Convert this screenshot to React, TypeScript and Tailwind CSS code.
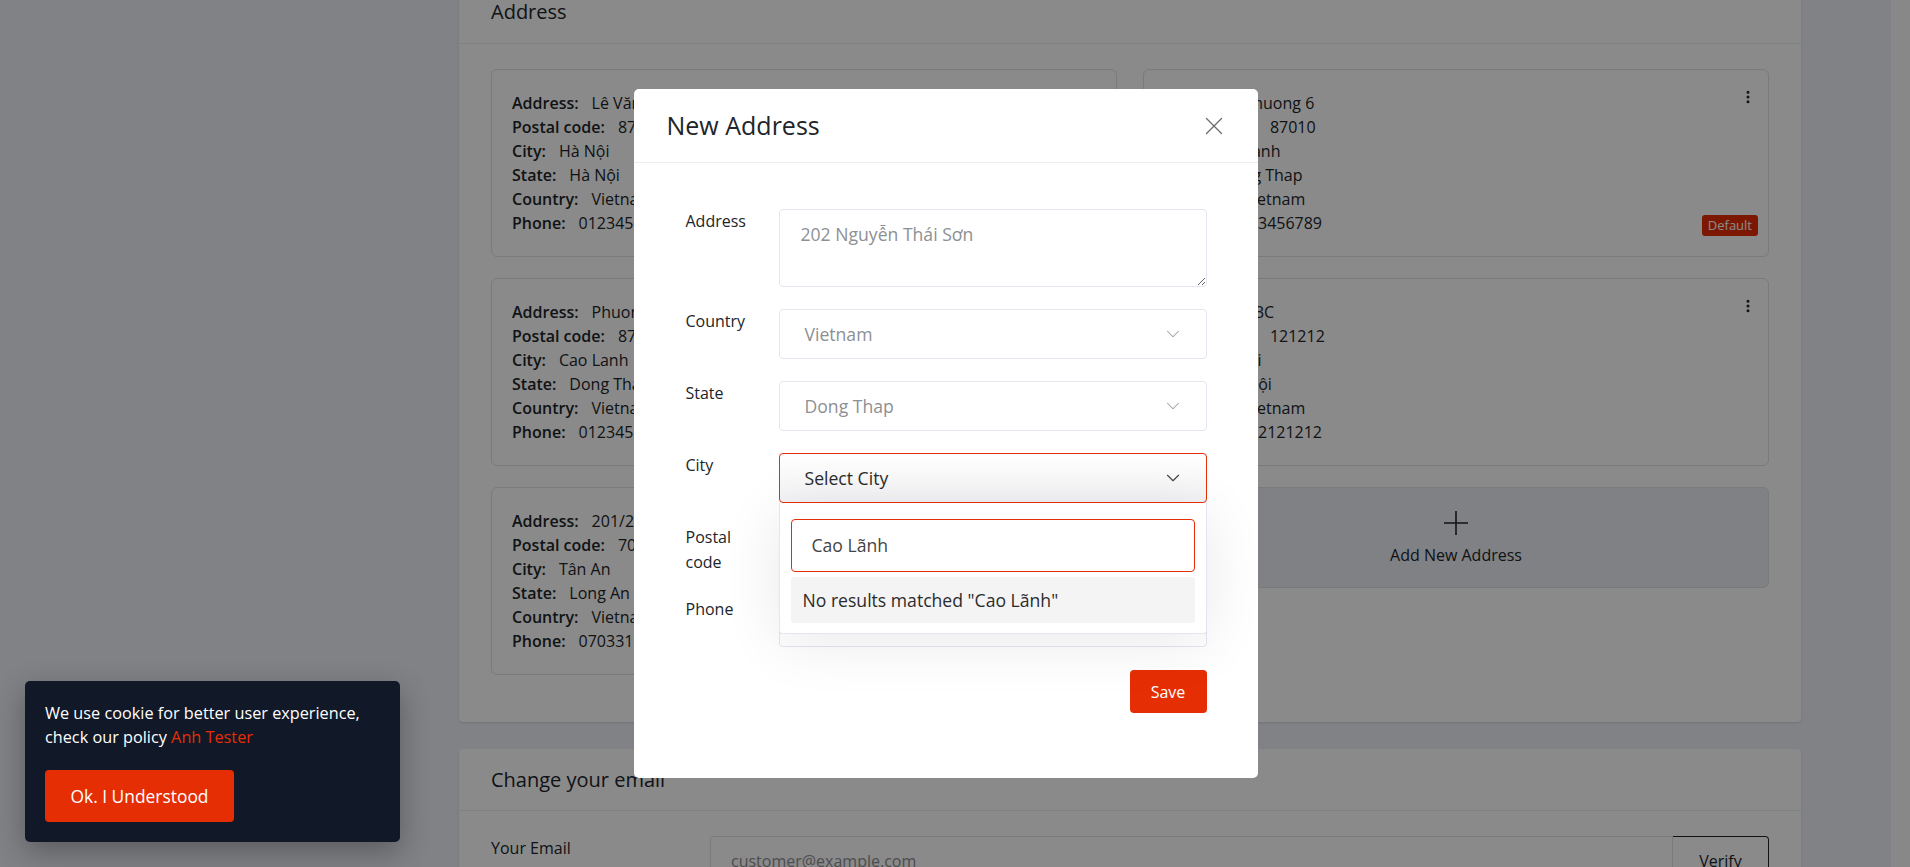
import { ChevronDown, EllipsisVertical, X } from 'lucide-react';

type Addr = {
  address: string;
  postal: string;
  city: string;
  state: string;
  country: string;
  phone: string;
  isDefault?: boolean;
};

const ADDRESSES: Addr[] = [
  { address: 'Lê Văn Lương', postal: '87000', city: 'Hà Nội', state: 'Hà Nội', country: 'Vietnam', phone: '0123456789' },
  { address: 'Phuong 6', postal: '87010', city: 'Cao Lanh', state: 'Dong Thap', country: 'Vietnam', phone: '0123456789', isDefault: true },
  { address: 'Phuong 1', postal: '87000', city: 'Cao Lanh', state: 'Dong Thap', country: 'Vietnam', phone: '0123456789' },
  { address: 'ABC', postal: '121212', city: 'Hà Nội', state: 'Hà Nội', country: 'Vietnam', phone: '0912121212' },
  { address: '201/2 Hùng Vương', postal: '70000', city: 'Tân An', state: 'Long An', country: 'Vietnam', phone: '0703311234' },
];

function Line({ label, value }: { label: string; value: string }) {
  return (
    <div className="flex leading-6">
      <span className="font-semibold">{label}</span>
      <span className="ml-[13px]">{value}</span>
    </div>
  );
}

function AddressItem({ a }: { a: Addr }) {
  return (
    <div className="relative rounded-[6px] border border-[#dee2e6] px-5 py-[21px] text-[16px] text-[#212529]">
      <Line label="Address:" value={a.address} />
      <Line label="Postal code:" value={a.postal} />
      <Line label="City:" value={a.city} />
      <Line label="State:" value={a.state} />
      <Line label="Country:" value={a.country} />
      <Line label="Phone:" value={a.phone} />
      <EllipsisVertical size={16} strokeWidth={2.5} className="absolute right-3 top-[19px] text-[#212529]" />
      {a.isDefault && (
        <span className="absolute bottom-5 right-[10px] rounded-[3px] bg-[#e62e04] px-[6px] py-[2px] text-[13px] leading-[17px] text-white">
          Default
        </span>
      )}
    </div>
  );
}

function AddNewCard() {
  return (
    <div className="flex h-[101px] flex-col items-center justify-center self-start rounded-[6px] border border-[#dee2e6] bg-[#eceff5] pt-[3px] text-[16px] text-[#212529]">
      <svg width="24" height="24" viewBox="0 0 24 24" stroke="currentColor" strokeWidth="1.6">
        <path d="M12 0v24M0 12h24" />
      </svg>
      <span className="mt-2 leading-6">Add New Address</span>
    </div>
  );
}

function SelectBox({ value, muted }: { value: string; muted?: boolean }) {
  return (
    <div className="flex h-[50px] items-center justify-between rounded-[4px] border border-[#e4e6ef] bg-white pl-[25px] pr-[22px]">
      <span className={muted ? 'text-[17.6px] text-[#8d8f94]' : 'text-[17.6px] text-[#2b2b2b]'}>{value}</span>
      <ChevronDown size={22} strokeWidth={1.1} className={muted ? 'text-[#9a9ca2]' : 'text-[#444]'} />
    </div>
  );
}

function FormRow({ label, children }: { label: React.ReactNode; children: React.ReactNode }) {
  return (
    <div className="flex">
      <div className="w-[93px] shrink-0 text-[16px] leading-[25px] text-[#212529]">{label}</div>
      <div className="relative flex-1">{children}</div>
    </div>
  );
}

function NewAddressModal() {
  return (
    <div className="w-[624px] rounded-[5px] bg-white">
      <div className="flex h-[74px] items-center justify-between border-b border-[#ebedf2] pl-[33px] pr-[29px]">
        <h2 className="text-[25px] font-normal text-[#212529]">New Address</h2>
        <X size={30} strokeWidth={1} className="text-[#6b6b6b]" />
      </div>
      <div className="flex flex-col gap-[22px] pb-[65px] pl-[52px] pr-[51px] pt-[46px]">
        <FormRow label="Address">
          <textarea
            className="block h-[78px] w-full rounded-[4px] border border-[#e4e6ef] px-[21px] py-[12px] text-[17.6px] leading-6 outline-none placeholder:text-[#8d8f94]"
            placeholder="202 Nguyễn Thái Sơn"
          />
        </FormRow>
        <FormRow label="Country">
          <SelectBox value="Vietnam" muted />
        </FormRow>
        <FormRow label="State">
          <SelectBox value="Dong Thap" muted />
        </FormRow>
        <FormRow label="City">
          <div className="flex h-[50px] items-center justify-between rounded-[4px] border border-[#e62e04] bg-gradient-to-b from-white to-[#f2f2f4] pl-[25px] pr-[22px]">
            <span className="text-[17.6px] text-[#2b2b2b]">Select City</span>
            <ChevronDown size={22} strokeWidth={1.2} className="text-[#444]" />
          </div>
          <div className="absolute left-0 right-0 top-full z-10 rounded-b-[4px] border border-t-0 border-[#e4e6ef] bg-white px-[11px] pb-[10px] pt-[16px] shadow-[0_8px_60px_rgba(0,0,0,0.09)]">
            <div className="flex h-[53px] items-center rounded-[4px] border border-[#e62e04] pl-[20px] text-[17.6px] text-[#444]">
              Cao Lãnh
            </div>
            <div className="mt-[5px] flex h-[46px] items-center rounded-[3px] bg-[#f4f4f5] pl-[12px] text-[17.6px] text-[#2b2b2b]">
              No results matched "Cao Lãnh"
            </div>
          </div>
        </FormRow>
        <FormRow label={<>Postal<br />code</>}>
          <div className="h-[50px] rounded-[4px] border border-[#e4e6ef]" />
        </FormRow>
        <FormRow label="Phone">
          <div className="h-[50px] rounded-[4px] border border-[#e4e6ef]" />
        </FormRow>
        <div className="mt-px flex justify-end">
          <button className="h-[43px] w-[77px] rounded-[4px] bg-[#e62e04] text-[16px] text-white">Save</button>
        </div>
      </div>
    </div>
  );
}

function CookieBox() {
  return (
    <div className="absolute bottom-[25px] left-[25px] w-[375px] rounded-[5px] bg-[#111827] p-5 shadow-[0_10px_30px_rgba(0,0,0,0.3)]">
      <p className="text-[16.25px] leading-6 text-white">
        We use cookie for better user experience, check our policy{' '}
        <span className="text-[#e62e04]">Anh Tester</span>
      </p>
      <button className="mt-[21px] h-[52px] w-[189px] rounded-[4px] bg-[#e62e04] text-[17.4px] text-white">
        Ok. I Understood
      </button>
    </div>
  );
}

export default function App() {
  return (
    <div className="relative h-[867px] overflow-hidden bg-[#eef1f8] font-['Open_Sans',sans-serif] text-[#212529]">
      <div className="flex h-full">
        <main className="flex-1 pl-[459px] pr-[90px]">
          <div className="-mt-[27px] flex flex-col gap-[27px]">
            {/* Address card */}
            <section className="rounded-[4px] bg-white shadow-sm">
              <div className="border-b border-[#e9ecef] px-8 pb-4 pt-6 text-[20px] leading-[30px]">Address</div>
              <div className="grid grid-cols-2 gap-x-[26px] gap-y-[21px] px-8 pb-[47px] pt-[25px]">
                <AddressItem a={ADDRESSES[0]} />
                <AddressItem a={ADDRESSES[1]} />
                <AddressItem a={ADDRESSES[2]} />
                <AddressItem a={ADDRESSES[3]} />
                <AddressItem a={ADDRESSES[4]} />
                <AddNewCard />
              </div>
            </section>

            {/* Email card */}
            <section className="rounded-[4px] bg-white shadow-sm">
              <div className="border-b border-[#e9ecef] px-8 pb-[15px] pt-4 text-[20px] leading-[30px]">Change your email</div>
              <div className="flex px-8 pb-8 pt-[25px]">
                <div className="w-[219px] shrink-0 text-[16px] leading-6">Your Email</div>
                <div className="flex flex-1">
                  <div className="flex h-[50px] flex-1 items-center rounded-l-[4px] border border-[#dee2e6] pl-5 text-[16px] text-[#8d8f94]">
                    customer@example.com
                  </div>
                  <button className="h-[50px] w-[96px] rounded-r-[4px] border border-l-0 border-[#212529] text-[16px]">Verify</button>
                </div>
              </div>
            </section>
          </div>
        </main>
        <div className="w-[19px] shrink-0 bg-[#fbfbfb]" />
      </div>

      {/* backdrop */}
      <div className="absolute inset-0 bg-black/[0.46]" />

      <CookieBox />

      <div className="absolute inset-0 right-[19px] flex items-start justify-center pt-[89px]">
        <NewAddressModal />
      </div>
    </div>
  );
}
